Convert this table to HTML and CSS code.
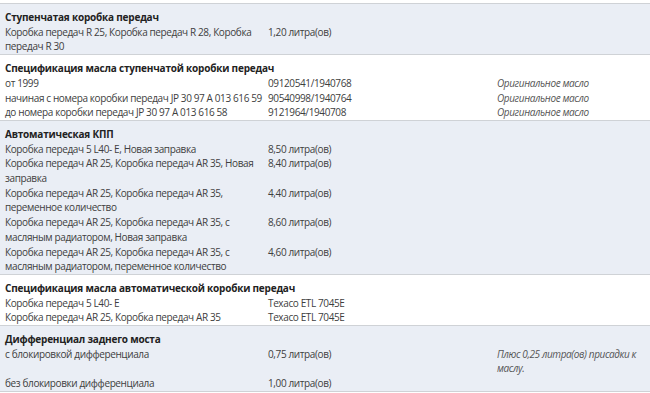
FILE: index.html
```html
<!DOCTYPE html>
<html lang="ru">
<head>
<meta charset="utf-8">
<link rel="stylesheet" href="styles.css">
</head>
<body>
<div class="spec">
  <section class="group shaded">
    <div class="head">Ступенчатая коробка передач</div>
    <div class="row"><div class="c1">Коробка передач R 25, Коробка передач R 28, Коробка передач R 30</div><div class="c2">1,20 литра(ов)</div><div class="c3"></div></div>
  </section>
  <section class="group">
    <div class="head">Спецификация масла ступенчатой коробки передач</div>
    <div class="row"><div class="c1">от 1999</div><div class="c2">09120541/1940768</div><div class="c3">Оригинальное масло</div></div>
    <div class="row"><div class="c1">начиная с номера коробки передач JP 30 97 A 013 616 59</div><div class="c2">90540998/1940764</div><div class="c3">Оригинальное масло</div></div>
    <div class="row"><div class="c1">до номера коробки передач JP 30 97 A 013 616 58</div><div class="c2">9121964/1940708</div><div class="c3">Оригинальное масло</div></div>
  </section>
  <section class="group shaded">
    <div class="head">Автоматическая КПП</div>
    <div class="row"><div class="c1">Коробка передач 5 L40- E, Новая заправка</div><div class="c2">8,50 литра(ов)</div><div class="c3"></div></div>
    <div class="row"><div class="c1">Коробка передач AR 25, Коробка передач AR 35, Новая заправка</div><div class="c2">8,40 литра(ов)</div><div class="c3"></div></div>
    <div class="row"><div class="c1">Коробка передач AR 25, Коробка передач AR 35, переменное количество</div><div class="c2">4,40 литра(ов)</div><div class="c3"></div></div>
    <div class="row"><div class="c1">Коробка передач AR 25, Коробка передач AR 35, с масляным радиатором, Новая заправка</div><div class="c2">8,60 литра(ов)</div><div class="c3"></div></div>
    <div class="row"><div class="c1">Коробка передач AR 25, Коробка передач AR 35, с масляным радиатором, переменное количество</div><div class="c2">4,60 литра(ов)</div><div class="c3"></div></div>
  </section>
  <section class="group">
    <div class="head">Спецификация масла автоматической коробки передач</div>
    <div class="row"><div class="c1">Коробка передач 5 L40- E</div><div class="c2">Texaco ETL 7045E</div><div class="c3"></div></div>
    <div class="row"><div class="c1">Коробка передач AR 25, Коробка передач AR 35</div><div class="c2">Texaco ETL 7045E</div><div class="c3"></div></div>
  </section>
  <section class="group shaded">
    <div class="head">Дифференциал заднего моста</div>
    <div class="row"><div class="c1">с блокировкой дифференциала</div><div class="c2">0,75 литра(ов)</div><div class="c3">Плюс 0,25 литра(ов) присадки к маслу.</div></div>
    <div class="row"><div class="c1">без блокировки дифференциала</div><div class="c2">1,00 литра(ов)</div><div class="c3"></div></div>
  </section>
</div>
</body>
</html>
```
FILE: styles.css
```css
html, body {
  margin: 0;
  padding: 0;
  background: #ffffff;
}
body {
  font-family: "Open Sans", "Noto Sans", sans-serif;
  font-size: 10px;
  letter-spacing: -0.38px;
  line-height: 14.7px;
  color: #404040;
}
.spec {
  padding-top: 3px;
}
.group {
  border-top: 1px solid #cfd2d6;
  padding: 6px 0 0 5px;
}
.spec .group:last-child {
  border-bottom: 1px solid #cfd2d6;
}
.shaded {
  background: #eaeef5;
}
.head {
  font-weight: 700;
  color: #222;
  letter-spacing: -0.2px;
}
.row {
  display: grid;
  grid-template-columns: 263px 229px 1fr;
}
.c1 {
  padding-right: 2px;
}
.c3 {
  font-style: italic;
  color: #555;
  padding-right: 8px;
}
```
